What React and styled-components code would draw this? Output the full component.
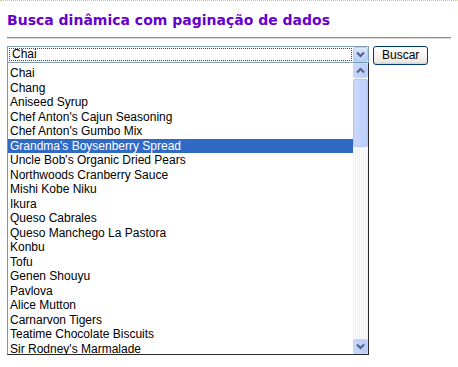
import React from 'react';
import styled, { createGlobalStyle } from 'styled-components';

const GlobalStyle = createGlobalStyle`
  body {
    margin: 0;
    background: #fff;
    font-family: "Liberation Sans", Arial, sans-serif;
  }
`;

const products = [
  'Chai',
  'Chang',
  'Aniseed Syrup',
  "Chef Anton's Cajun Seasoning",
  "Chef Anton's Gumbo Mix",
  "Grandma's Boysenberry Spread",
  "Uncle Bob's Organic Dried Pears",
  'Northwoods Cranberry Sauce',
  'Mishi Kobe Niku',
  'Ikura',
  'Queso Cabrales',
  'Queso Manchego La Pastora',
  'Konbu',
  'Tofu',
  'Genen Shouyu',
  'Pavlova',
  'Alice Mutton',
  'Carnarvon Tigers',
  'Teatime Chocolate Biscuits',
  "Sir Rodney's Marmalade",
];

const Page = styled.div`
  border-top: 1px dotted #c9c28c;
  padding: 0 7px;
  width: 444px;
`;

const Title = styled.h2`
  margin: 10px 0 0;
  font-family: "DejaVu Sans", Verdana, sans-serif;
  font-size: 14px;
  font-weight: bold;
  color: #6600cc;
  line-height: 19px;
`;

const Rule = styled.hr`
  margin: 7px 0 0;
  border: 0;
  border-top: 1px solid #8c8c8c;
  border-bottom: 1px solid #d8d8d8;
  height: 0;
`;

const SearchRow = styled.div`
  display: flex;
  align-items: flex-start;
  gap: 4px;
  margin-top: 7px;
`;

const Combo = styled.div`
  display: flex;
  flex-direction: column;
  width: 362px;
`;

const ComboBox = styled.div`
  display: flex;
  height: 17px;
  border: 1px solid #7f9db9;
  box-sizing: border-box;
  background: #fff;
`;

const ComboText = styled.div`
  flex: 1;
  margin: 1px;
  padding-left: 2px;
  border: 1px dotted #444;
  font-size: 12px;
  line-height: 11px;
  color: #000;
`;

const ArrowButton = styled.div`
  width: 15px;
  display: flex;
  align-items: center;
  justify-content: center;
  background: linear-gradient(#dbe7fd, #b5cdf8);
  border: 1px solid #b9cdf4;
  box-sizing: border-box;
  border-radius: 2px;
`;

const ListBox = styled.div`
  display: flex;
  height: 292px;
  border: 1px solid #8e8e8e;
  border-right-color: #2a2a2a;
  border-bottom-color: #2a2a2a;
  border-top: 0;
  box-sizing: border-box;
  background: #fff;
`;

const Items = styled.ul`
  flex: 1;
  list-style: none;
  margin: 0;
  padding: 3px 0 0;
  overflow: hidden;
`;

const Item = styled.li`
  height: 14.5px;
  line-height: 14.5px;
  font-size: 12px;
  padding-left: 2px;
  white-space: nowrap;
  color: ${(p) => (p.$selected ? '#fff' : '#000')};
  background: ${(p) => (p.$selected ? '#316ac5' : 'transparent')};
`;

const ScrollBar = styled.div`
  width: 15px;
  display: flex;
  flex-direction: column;
  background: repeating-linear-gradient(90deg, #f4f1e4 0 1px, #fff 1px 2px);
`;

const ScrollButton = styled.div`
  height: 15px;
  display: flex;
  align-items: center;
  justify-content: center;
  background: linear-gradient(90deg, #c8d8fb, #b6cbf7);
  border: 1px solid #c3d3fd;
  box-sizing: border-box;
  border-radius: 2px;
`;

const Thumb = styled.div`
  height: 68px;
  margin-top: 1px;
  background: linear-gradient(90deg, #c9d9fc, #bccffa);
  border: 1px solid #b0c6f5;
  box-sizing: border-box;
  border-radius: 2px;
`;

const Track = styled.div`
  flex: 1;
`;

const Button = styled.button`
  height: 19px;
  padding: 0 8px;
  font-family: "Liberation Sans", Arial, sans-serif;
  font-size: 12px;
  color: #000;
  border: 1px solid #003c74;
  border-radius: 3px;
  background: linear-gradient(#fff, #ecebe6 85%, #d6d0c5);
  line-height: 15px;
`;

function Chevron({ up }) {
  return (
    <svg width="9" height="7" viewBox="0 0 9 7">
      <path
        d={up ? 'M1 5.5 L4.5 2 L8 5.5' : 'M1 1.5 L4.5 5 L8 1.5'}
        fill="none"
        stroke="#4d6185"
        strokeWidth="2"
      />
    </svg>
  );
}

export default function App() {
  return (
    <>
      <GlobalStyle />
      <Page>
        <Title>Busca dinâmica com paginação de dados</Title>
        <Rule />
        <SearchRow>
          <Combo>
            <ComboBox>
              <ComboText>Chai</ComboText>
              <ArrowButton>
                <Chevron />
              </ArrowButton>
            </ComboBox>
            <ListBox>
              <Items>
                {products.map((name) => (
                  <Item key={name} $selected={name === "Grandma's Boysenberry Spread"}>
                    {name}
                  </Item>
                ))}
              </Items>
              <ScrollBar>
                <ScrollButton>
                  <Chevron up />
                </ScrollButton>
                <Thumb />
                <Track />
                <ScrollButton>
                  <Chevron />
                </ScrollButton>
              </ScrollBar>
            </ListBox>
          </Combo>
          <Button>Buscar</Button>
        </SearchRow>
      </Page>
    </>
  );
}
